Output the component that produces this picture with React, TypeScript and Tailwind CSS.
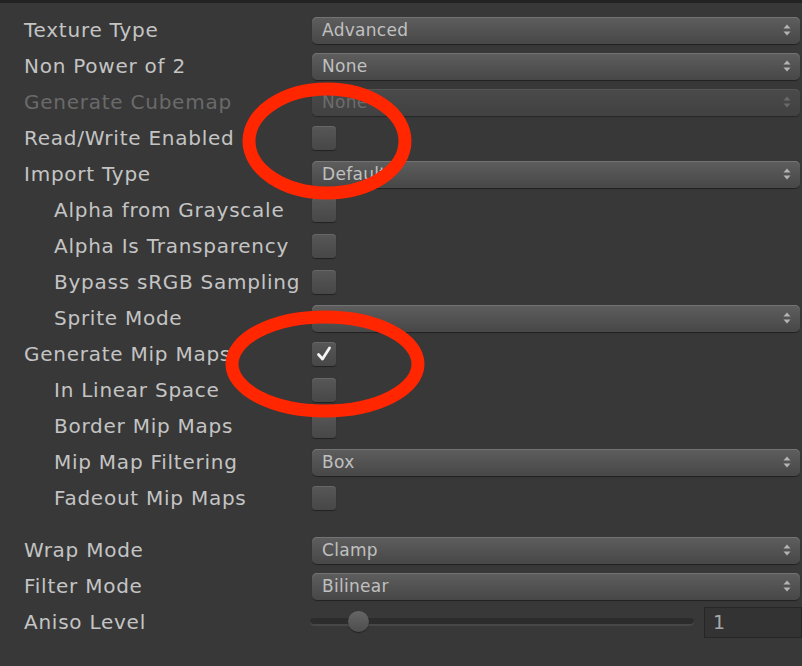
import React from "react";

const font = { fontFamily: '"DejaVu Sans", "Liberation Sans", sans-serif' };

function Arrows({ dim = false }: { dim?: boolean }) {
  const c = dim ? "#6a6a6a" : "#b4b4b4";
  return (
    <svg width="8" height="12" viewBox="0 0 8 12" className="shrink-0">
      <path d="M4 0.5 L7.5 4.5 L0.5 4.5 Z" fill={c} />
      <path d="M4 11.5 L7.5 7.5 L0.5 7.5 Z" fill={c} />
    </svg>
  );
}

function Dropdown({ value, disabled = false }: { value: string; disabled?: boolean }) {
  return (
    <div
      className={
        "flex h-[27px] w-full items-center justify-between rounded-[5px] pl-[10px] pr-[9px] text-[17px] tracking-[0.3px] " +
        (disabled
          ? "bg-linear-to-b from-[#4a4a4a] to-[#414141] text-[#6c6c6c] shadow-[inset_0_1px_0_#555,0_1px_1px_#262626]"
          : "bg-linear-to-b from-[#5e5e5e] to-[#474747] text-[#c0c0c0] shadow-[inset_0_1px_0_#737373,0_1px_1px_#222]")
      }
      style={font}
    >
      <span className="leading-none">{value}</span>
      <Arrows dim={disabled} />
    </div>
  );
}

function Checkbox({ checked = false }: { checked?: boolean }) {
  return (
    <div className="flex h-[24px] w-[24px] items-center justify-center rounded-[4px] bg-linear-to-b from-[#575757] to-[#474747] shadow-[inset_0_1px_0_#666,0_1px_1px_#222]">
      {checked && (
        <svg width="18" height="18" viewBox="0 0 18 18">
          <path d="M3.5 9.5 L7.5 14 L14.5 3" stroke="#f4f4f4" strokeWidth="2.8" fill="none" strokeLinecap="round" strokeLinejoin="round" />
        </svg>
      )}
    </div>
  );
}

type Row = {
  label: string;
  indent?: boolean;
  disabled?: boolean;
  kind: "dd" | "cb";
  value?: string;
  checked?: boolean;
};

const rows: Row[] = [
  { label: "Texture Type", kind: "dd", value: "Advanced" },
  { label: "Non Power of 2", kind: "dd", value: "None" },
  { label: "Generate Cubemap", kind: "dd", value: "None", disabled: true },
  { label: "Read/Write Enabled", kind: "cb" },
  { label: "Import Type", kind: "dd", value: "Default" },
  { label: "Alpha from Grayscale", kind: "cb", indent: true },
  { label: "Alpha Is Transparency", kind: "cb", indent: true },
  { label: "Bypass sRGB Sampling", kind: "cb", indent: true },
  { label: "Sprite Mode", kind: "dd", value: "", indent: true },
  { label: "Generate Mip Maps", kind: "cb", checked: true },
  { label: "In Linear Space", kind: "cb", indent: true },
  { label: "Border Mip Maps", kind: "cb", indent: true },
  { label: "Mip Map Filtering", kind: "dd", value: "Box", indent: true },
  { label: "Fadeout Mip Maps", kind: "cb", indent: true },
];

const rows2: Row[] = [
  { label: "Wrap Mode", kind: "dd", value: "Clamp" },
  { label: "Filter Mode", kind: "dd", value: "Bilinear" },
];

function PropRow({ r }: { r: Row }) {
  return (
    <div className="flex h-[36px] items-center">
      <div
        className={
          "w-[312px] shrink-0 whitespace-nowrap text-[20px] tracking-[0.75px] " +
          (r.indent ? "pl-[54px] " : "pl-[24px] ") +
          (r.disabled ? "text-[#6a6a6a]" : "text-[#c4c4c4]")
        }
        style={font}
      >
        {r.label}
      </div>
      <div className="flex flex-1 items-center pr-[2px]">
        {r.kind === "dd" ? (
          <Dropdown value={r.value ?? ""} disabled={r.disabled} />
        ) : (
          <Checkbox checked={r.checked} />
        )}
      </div>
    </div>
  );
}

export default function App() {
  return (
    <div className="relative h-[666px] w-[802px] overflow-hidden bg-[#383838]">
      <div className="h-[3px] bg-[#232323]" />
      <div className="pt-[9px]">
        {rows.map((r) => (
          <PropRow key={r.label} r={r} />
        ))}
        <div className="h-[16px]" />
        {rows2.map((r) => (
          <PropRow key={r.label} r={r} />
        ))}
        <div className="flex h-[36px] items-center">
          <div className="w-[310px] shrink-0 pl-[24px] text-[20px] tracking-[0.75px] text-[#c4c4c4]" style={font}>
            Aniso Level
          </div>
          <div className="relative flex h-[22px] w-[384px] items-center">
            <div className="h-[8px] w-full rounded-full bg-[#2c2c2c] shadow-[inset_0_-2px_0_#474747]" />
            <div className="absolute left-[38px] top-[0px] h-[21px] w-[21px] rounded-full bg-linear-to-b from-[#666] to-[#4d4d4d] shadow-[0_1px_1px_#222]" />
          </div>
          <div
            className="ml-[10px] flex h-[31px] flex-1 items-center border border-[#262626] bg-[#333] pl-[8px] text-[19px] text-[#a8a8a8]"
            style={font}
          >
            1
          </div>
        </div>
      </div>
      <svg className="pointer-events-none absolute left-0 top-0" width="802" height="666">
        <ellipse cx="327" cy="141" rx="78" ry="52" fill="none" stroke="#ff2600" strokeWidth="13" />
        <ellipse cx="325" cy="364" rx="93" ry="47" fill="none" stroke="#ff2600" strokeWidth="13" />
      </svg>
    </div>
  );
}
